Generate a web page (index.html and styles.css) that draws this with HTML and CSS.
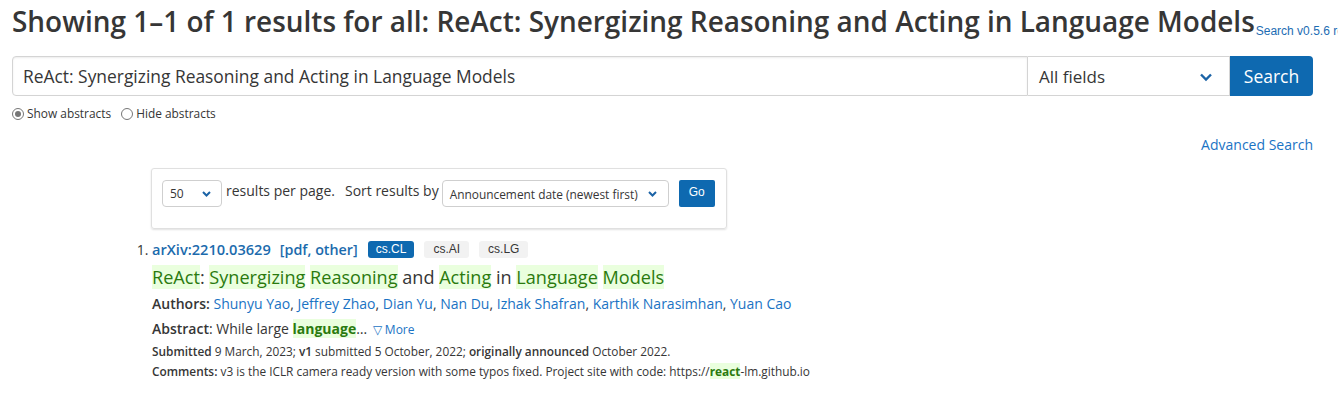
FILE: index.html
```html
<!DOCTYPE html>
<html>
<head>
<meta charset="utf-8">
<link rel="stylesheet" href="styles.css">
</head>
<body>
<div class="page">
  <div class="title-row">
    <h1 class="title">Showing 1–1 of 1 results for all: ReAct: Synergizing Reasoning and Acting in Language Models</h1>
    <a class="version">Search v0.5.6 released 2020-02-24</a>
  </div>

  <form class="search-bar">
    <div class="query">ReAct: Synergizing Reasoning and Acting in Language Models</div>
    <div class="field-select">
      <span>All fields</span>
      <svg class="chev" width="14" height="10" viewBox="0 0 14 10"><path d="M2 2.5 L7 7.5 L12 2.5" fill="none" stroke="#1b63a6" stroke-width="2.4"/></svg>
    </div>
    <button type="button" class="btn-search">Search</button>
  </form>

  <div class="radios">
    <label class="radio"><span class="dot checked"></span>Show abstracts</label>
    <label class="radio"><span class="dot"></span>Hide abstracts</label>
  </div>

  <div class="adv-row"><a class="adv">Advanced Search</a></div>

  <div class="content">
    <div class="controls">
      <div class="sel sel-num"><span>50</span><svg width="9" height="6" viewBox="0 0 9 6"><path d="M1 1 L4.5 4.5 L8 1" fill="none" stroke="#1b63a6" stroke-width="2"/></svg></div>
      <span class="ctl-text">results per page.</span>
      <span class="ctl-text sort">Sort results by</span>
      <div class="sel sel-sort"><span>Announcement date (newest first)</span><svg width="9" height="6" viewBox="0 0 9 6"><path d="M1 1 L4.5 4.5 L8 1" fill="none" stroke="#1b63a6" stroke-width="2"/></svg></div>
      <button type="button" class="btn-go">Go</button>
    </div>

    <ol class="results">
      <li class="result">
        <div class="list-title">
          <a class="arxiv-id">arXiv:2210.03629</a>
          <span class="links">[<a>pdf</a>, <a>other</a>]</span>
          <span class="tag primary">cs.CL</span>
          <span class="tag">cs.AI</span>
          <span class="tag">cs.LG</span>
        </div>
        <p class="paper-title"><span class="hit">ReAct</span>: <span class="hit">Synergizing</span> <span class="hit">Reasoning</span> and <span class="hit">Acting</span> in <span class="hit">Language</span> <span class="hit">Models</span></p>
        <p class="authors"><b>Authors:</b> <a>Shunyu Yao</a>, <a>Jeffrey Zhao</a>, <a>Dian Yu</a>, <a>Nan Du</a>, <a>Izhak Shafran</a>, <a>Karthik Narasimhan</a>, <a>Yuan Cao</a></p>
        <p class="abstract"><b class="label">Abstract</b>: While large <span class="hit bold">language</span>… <a class="more">▽ More</a></p>
        <p class="small"><b>Submitted</b> 9 March, 2023; <b>v1</b> submitted 5 October, 2022; <b>originally announced</b> October 2022.</p>
        <p class="small"><b>Comments:</b> v3 is the ICLR camera ready version with some typos fixed. Project site with code: https://<span class="hit bold">react</span>-lm.github.io</p>
      </li>
    </ol>
  </div>
</div>
</body>
</html>
```

FILE: styles.css
```css
html, body {
  margin: 0;
  padding: 0;
  background: #fff;
  overflow: hidden;
}
body {
  font-family: "Open Sans", "Liberation Sans", sans-serif;
  color: #363636;
}
.page {
  padding: 0 25px 0 12px;
}
.title-row {
  display: flex;
  align-items: baseline;
  white-space: nowrap;
  padding-top: 2px;
}
.title {
  font-size: 27.95px;
  font-weight: 600;
  margin: 0;
  line-height: 38px;
  color: #363636;
  flex-shrink: 0;
}
.version {
  font-family: "Liberation Sans", Arial, sans-serif;
  font-size: 12px;
  color: #1c6cb3;
  margin-left: 1px;
  position: relative;
  top: 3px;
  flex-shrink: 0;
}
.search-bar {
  display: flex;
  margin: 16px 0 0 0;
  height: 40px;
}
.query {
  flex: 1;
  border: 1px solid #d4d4d4;
  border-radius: 4px 0 0 4px;
  box-shadow: inset 0 1px 2px rgba(10,10,10,0.08);
  font-size: 17.4px;
  line-height: 38px;
  padding-left: 10px;
  color: #363636;
}
.field-select {
  border: 1px solid #d4d4d4;
  border-left: none;
  display: flex;
  align-items: center;
  justify-content: space-between;
  padding: 0 16px 0 11px;
  font-size: 17px;
  box-sizing: border-box;
  width: 202px;
}
.chev { margin-top: 1px; }
.btn-search {
  width: 83px;
  background: #0e69b0;
  color: #fff;
  border: none;
  border-radius: 0 4px 4px 0;
  font-family: "Open Sans", sans-serif;
  font-size: 17.5px;
  padding: 0;
}
.radios {
  display: flex;
  gap: 10px;
  margin-top: 10px;
  font-size: 11.9px;
  line-height: 15px;
  color: #363636;
}
.radio {
  display: flex;
  align-items: center;
}
.dot {
  width: 12px;
  height: 12px;
  border: 1px solid #767676;
  border-radius: 50%;
  box-sizing: border-box;
  margin-right: 3px;
  display: inline-block;
  position: relative;
}
.dot.checked::after {
  content: "";
  position: absolute;
  left: 2px; top: 2px;
  width: 6px; height: 6px;
  border-radius: 50%;
  background: #767676;
}
.adv-row {
  display: flex;
  justify-content: flex-end;
  margin-top: 14px;
}
.adv {
  font-size: 14px;
  color: #1a73c4;
  line-height: 20px;
}
.content {
  margin-left: 139px;
  margin-top: 13px;
}
.controls {
  width: 576px;
  box-sizing: border-box;
  height: 61px;
  border: 1px solid #e0e0e0;
  border-radius: 3px;
  box-shadow: 0 1px 2px rgba(10,10,10,0.12);
  display: flex;
  align-items: flex-start;
  padding: 11px 0 0 10px;
  white-space: nowrap;
}
.controls > * { flex-shrink: 0; }
.sel {
  height: 27px;
  box-sizing: border-box;
  border: 1px solid #cfcfcf;
  border-radius: 4px;
  display: flex;
  align-items: center;
  justify-content: space-between;
  font-size: 12px;
  color: #363636;
}
.sel-num {
  width: 60px;
  padding: 0 10px 0 7px;
}
.sel-sort {
  width: 227px;
  padding: 0 11px 0 7px;
  font-size: 11.9px;
}
.ctl-text {
  font-size: 14px;
  line-height: 20px;
  margin-left: 4px;
  margin-top: 1px;
}
.ctl-text.sort {
  margin-left: 10px;
  margin-right: 3px;
}
.btn-go {
  margin-left: 10px;
  width: 36px;
  height: 27px;
  background: #0e69b0;
  color: #fff;
  border: none;
  border-radius: 2px;
  font-family: "Liberation Sans", Arial, sans-serif;
  font-size: 12px;
  padding: 0 0 3px 0;
}
.results {
  margin: 9px 0 0 0;
  padding: 0 0 0 1px;
  list-style-position: outside;
  font-size: 14px;
}
.result::marker {
  color: #363636;
  font-size: 14px;
}
.list-title {
  display: flex;
  align-items: center;
  height: 22px;
  font-size: 14.6px;
}
.arxiv-id {
  color: #1c6bad;
  font-weight: 600;
}
.links {
  color: #1c6bad;
  font-weight: 600;
  margin-left: 9px;
  font-size: 14.3px;
}
.links a { color: #1c6bad; }
.tag {
  font-family: "Liberation Sans", Arial, sans-serif;
  font-size: 12px;
  background: #f2f2f2;
  color: #363636;
  border-radius: 3px;
  height: 17px;
  line-height: 17px;
  padding: 0 9px;
  margin-left: 10px;
}
.tag.primary {
  background: #0e69b0;
  color: #fff;
  margin-left: 10px;
  padding: 0 8px;
}
.paper-title {
  margin: 4px 0 0 0;
  font-size: 18.1px;
  line-height: 26px;
  color: #363636;
}
.hit {
  background: #eaffde;
  color: #2a7a0f;
}
.hit.bold { font-weight: 700; }
.authors {
  margin: 3px 0 0 0;
  font-size: 14px;
  line-height: 22px;
}
.authors b { font-weight: 600; }
.authors a { color: #1a73c4; }
.abstract {
  margin: 3px 0 0 0;
  font-size: 14px;
  line-height: 22px;
}
.abstract .label { font-weight: 600; }
.more {
  color: #1a73c4;
  font-size: 12px;
  margin-left: 2px;
}
.small {
  margin: 0;
  font-size: 11.85px;
  line-height: 20px;
}
.small b { font-weight: 600; }
```
